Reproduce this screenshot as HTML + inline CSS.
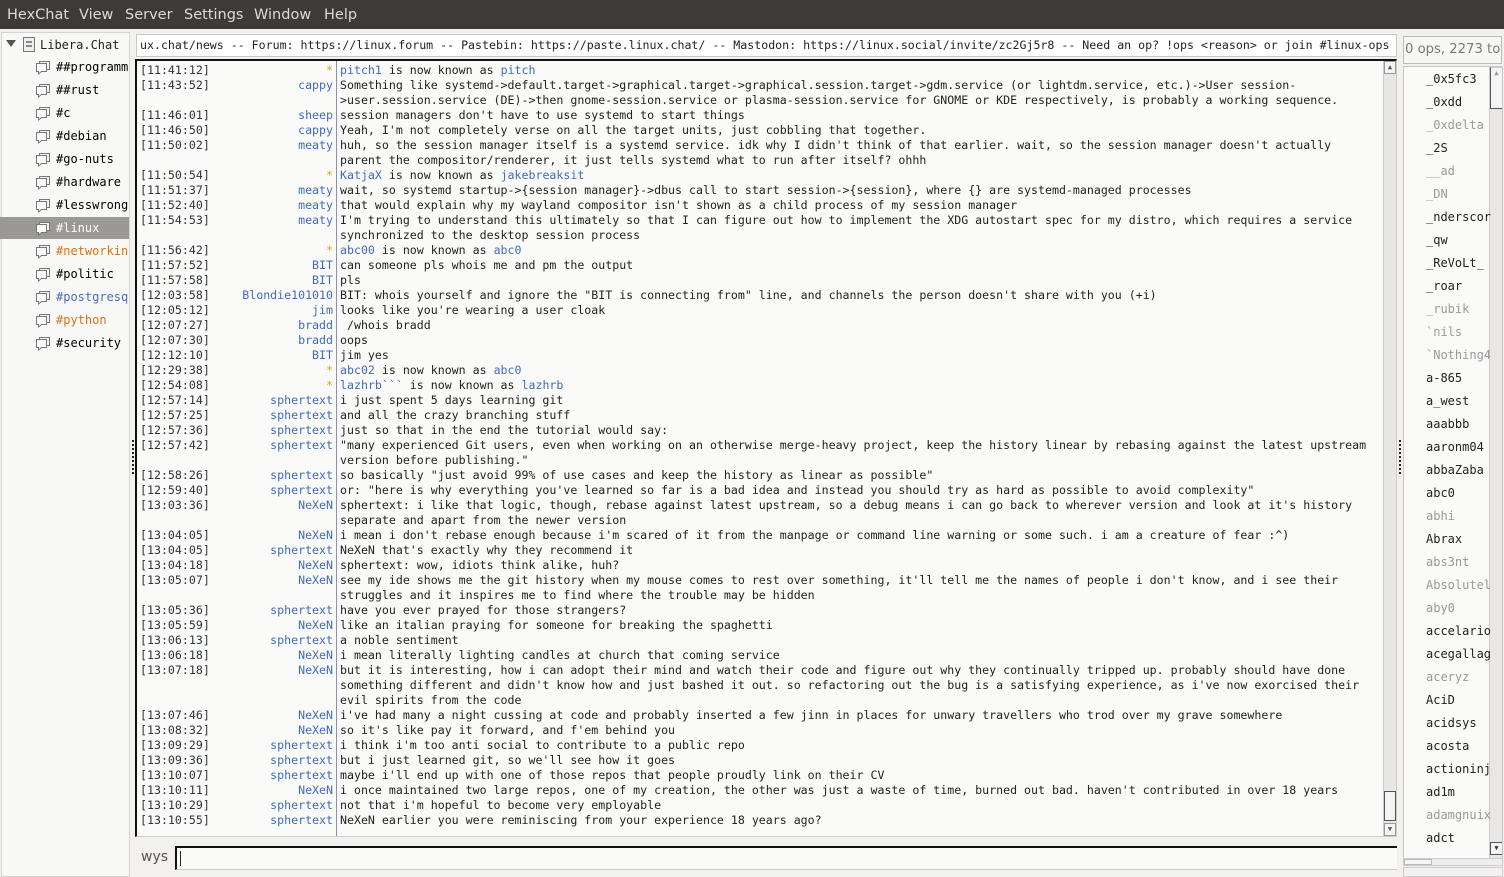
<!DOCTYPE html>
<html><head><meta charset="utf-8">
<style>
*{margin:0;padding:0;box-sizing:border-box}
body{width:1504px;height:877px;overflow:hidden;background:#f2f1f0;position:relative;font-family:"DejaVu Sans Mono","Liberation Mono",monospace}
#menu{position:absolute;left:0;top:0;width:1504px;height:29px;background:#3c3b37;color:#dfdbd2;font-family:"DejaVu Sans","Liberation Sans",sans-serif;font-size:14.5px;line-height:31px}
#menu span{position:absolute;top:0}
#tree{position:absolute;left:1px;top:32px;width:129px;height:845px;background:#f8f8f7;border:1px solid #d6d4d0;font-size:12px;color:#222}
.ti{position:absolute;height:21px;line-height:21px;white-space:nowrap;overflow:hidden}
.ic{position:absolute;left:35px;width:16px;height:16px}
#topic{position:absolute;left:136px;top:34px;width:1261px;height:23px;background:#fff;border:1px solid #c9c7c3;font-size:11.6px;line-height:21px;padding-left:3px;white-space:nowrap;overflow:hidden;color:#222}
#chat{position:absolute;left:135px;top:59px;width:1262px;height:778px;background:#fafaf9;border-top:2px solid #111;border-left:2px solid #111;border-right:1px solid #ccc;border-bottom:1px solid #ccc;overflow:hidden}
.r{position:absolute;left:0;width:1246px;height:15px;line-height:15px;font-size:11.6px;white-space:pre;color:#222}
.t{position:absolute;left:3px;color:#2e3436}
.n{position:absolute;right:1050px;color:#3f6bbf;text-align:right}
.m{position:absolute;left:203px}
.b{color:#3f6bbf}
.y{color:#d6a520}
#sep{position:absolute;left:199px;top:0;width:1px;height:778px;background:#8e8fa8}
#vs{position:absolute;left:1246px;top:0;width:13px;height:776px;background:#e8e7e5;border-left:1px solid #ccc}
#ops{position:absolute;left:1403px;top:36px;width:99px;height:28px;border:1px solid #bcbab5;background:#f7f7f6;font-family:"DejaVu Sans","Liberation Sans",sans-serif;font-size:13.2px;line-height:26px;color:#7a7a7a;padding-left:1px;white-space:nowrap;overflow:hidden}
#ul{position:absolute;left:1403px;top:66px;width:100px;height:793px;background:#fafaf9;border:1px solid #c9c7c3;overflow:hidden;font-size:12px;color:#222}
.u{position:absolute;left:22px;white-space:nowrap}
.aw{color:#9a9a9a}
</style></head><body>
<div id="menu"><span style="left:7px">HexChat</span><span style="left:79px">View</span><span style="left:125px">Server</span><span style="left:184px">Settings</span><span style="left:254px">Window</span><span style="left:324px">Help</span></div>

<div id="tree">
<div style="position:absolute;left:4px;top:7px;width:0;height:0;border-left:5px solid transparent;border-right:5px solid transparent;border-top:7px solid #555"></div>
<svg style="position:absolute;left:20px;top:3px" width="15" height="17"><rect x="1.5" y="1.5" width="11" height="14" fill="#eee" stroke="#777"/><rect x="4" y="5" width="6" height="2" fill="#888"/><rect x="4" y="9" width="6" height="2" fill="#888"/></svg>
<div class="ti" style="left:38px;top:2px">Libera.Chat</div>
</div>
<svg width="0" height="0" style="position:absolute"><defs><g id="bub"><path d="M4.5 2.5h10v8h-10z" fill="#f4f4f4" stroke="#777"/><path d="M1.5 4.5h10v8h-5l-3 2.5v-2.5h-2z" fill="#fafafa" stroke="#777"/></g></defs></svg>
<div style="position:absolute;left:0;top:217px;width:129px;height:22px;background:#9a9994"></div>
<div style="position:absolute;left:0;top:33px;font-size:12px">
<svg class="ic" style="top:26px"><use href="#bub"/></svg><div class="ti" style="left:56px;top:24px;width:72px">##programming</div>
<svg class="ic" style="top:49px"><use href="#bub"/></svg><div class="ti" style="left:56px;top:47px">##rust</div>
<svg class="ic" style="top:72px"><use href="#bub"/></svg><div class="ti" style="left:56px;top:70px">#c</div>
<svg class="ic" style="top:95px"><use href="#bub"/></svg><div class="ti" style="left:56px;top:93px">#debian</div>
<svg class="ic" style="top:118px"><use href="#bub"/></svg><div class="ti" style="left:56px;top:116px">#go-nuts</div>
<svg class="ic" style="top:141px"><use href="#bub"/></svg><div class="ti" style="left:56px;top:139px">#hardware</div>
<svg class="ic" style="top:164px"><use href="#bub"/></svg><div class="ti" style="left:56px;top:162px;width:72px">#lesswrong</div>
<svg class="ic" style="top:187px"><use href="#bub"/></svg><div class="ti" style="left:56px;top:185px;color:#fff">#linux</div>
<svg class="ic" style="top:210px"><use href="#bub"/></svg><div class="ti" style="left:56px;top:208px;width:72px;color:#d9731a">#networking</div>
<svg class="ic" style="top:233px"><use href="#bub"/></svg><div class="ti" style="left:56px;top:231px">#politic</div>
<svg class="ic" style="top:256px"><use href="#bub"/></svg><div class="ti" style="left:56px;top:254px;width:72px;color:#4a6fb8">#postgresql</div>
<svg class="ic" style="top:279px"><use href="#bub"/></svg><div class="ti" style="left:56px;top:277px;color:#d9731a">#python</div>
<svg class="ic" style="top:302px"><use href="#bub"/></svg><div class="ti" style="left:56px;top:300px">#security</div>
</div>
<div style="position:absolute;left:132px;top:440px;width:2px;height:34px;background:repeating-linear-gradient(#222 0 2px,transparent 2px 4px)"></div>

<div id="topic">ux.chat/news -- Forum: https://linux.forum -- Pastebin: https://paste.linux.chat/ -- Mastodon: https://linux.social/invite/zc2Gj5r8 -- Need an op? !ops &lt;reason&gt; or join #linux-ops</div>

<div id="chat">
<div id="sep"></div>
<div id="vs"><div style="position:absolute;left:0;top:0;width:12px;height:13px;border:1px solid #999;background:#f4f4f4;font-size:7px;text-align:center;line-height:11px;color:#555">▲</div><div style="position:absolute;left:0;top:730px;width:12px;height:30px;border:1px solid #555;background:#f4f4f4"></div><div style="position:absolute;left:0;top:762px;width:12px;height:13px;border:1px solid #999;background:#f4f4f4;font-size:7px;text-align:center;line-height:11px;color:#555">▼</div></div>
<div style="position:absolute;left:0;top:2px;width:1246px">
<div class="r" style="top:0"><span class="t">[11:41:12]</span><span class="n y">*</span><span class="m"><span class="b">pitch1</span> is now known as <span class="b">pitch</span></span></div>
<div class="r" style="top:15px"><span class="t">[11:43:52]</span><span class="n">cappy</span><span class="m">Something like systemd-&gt;default.target-&gt;graphical.target-&gt;graphical.session.target-&gt;gdm.service (or lightdm.service, etc.)-&gt;User session-</span></div>
<div class="r" style="top:30px"><span class="m">&gt;user.session.service (DE)-&gt;then gnome-session.service or plasma-session.service for GNOME or KDE respectively, is probably a working sequence.</span></div>
<div class="r" style="top:45px"><span class="t">[11:46:01]</span><span class="n">sheep</span><span class="m">session managers don't have to use systemd to start things</span></div>
<div class="r" style="top:60px"><span class="t">[11:46:50]</span><span class="n">cappy</span><span class="m">Yeah, I'm not completely verse on all the target units, just cobbling that together.</span></div>
<div class="r" style="top:75px"><span class="t">[11:50:02]</span><span class="n">meaty</span><span class="m">huh, so the session manager itself is a systemd service. idk why I didn't think of that earlier. wait, so the session manager doesn't actually</span></div>
<div class="r" style="top:90px"><span class="m">parent the compositor/renderer, it just tells systemd what to run after itself? ohhh</span></div>
<div class="r" style="top:105px"><span class="t">[11:50:54]</span><span class="n y">*</span><span class="m"><span class="b">KatjaX</span> is now known as <span class="b">jakebreaksit</span></span></div>
<div class="r" style="top:120px"><span class="t">[11:51:37]</span><span class="n">meaty</span><span class="m">wait, so systemd startup-&gt;{session manager}-&gt;dbus call to start session-&gt;{session}, where {} are systemd-managed processes</span></div>
<div class="r" style="top:135px"><span class="t">[11:52:40]</span><span class="n">meaty</span><span class="m">that would explain why my wayland compositor isn't shown as a child process of my session manager</span></div>
<div class="r" style="top:150px"><span class="t">[11:54:53]</span><span class="n">meaty</span><span class="m">I'm trying to understand this ultimately so that I can figure out how to implement the XDG autostart spec for my distro, which requires a service</span></div>
<div class="r" style="top:165px"><span class="m">synchronized to the desktop session process</span></div>
<div class="r" style="top:180px"><span class="t">[11:56:42]</span><span class="n y">*</span><span class="m"><span class="b">abc00</span> is now known as <span class="b">abc0</span></span></div>
<div class="r" style="top:195px"><span class="t">[11:57:52]</span><span class="n">BIT</span><span class="m">can someone pls whois me and pm the output</span></div>
<div class="r" style="top:210px"><span class="t">[11:57:58]</span><span class="n">BIT</span><span class="m">pls</span></div>
<div class="r" style="top:225px"><span class="t">[12:03:58]</span><span class="n">Blondie101010</span><span class="m">BIT: whois yourself and ignore the "BIT is connecting from" line, and channels the person doesn't share with you (+i)</span></div>
<div class="r" style="top:240px"><span class="t">[12:05:12]</span><span class="n">jim</span><span class="m">looks like you're wearing a user cloak</span></div>
<div class="r" style="top:255px"><span class="t">[12:07:27]</span><span class="n">bradd</span><span class="m"> /whois bradd</span></div>
<div class="r" style="top:270px"><span class="t">[12:07:30]</span><span class="n">bradd</span><span class="m">oops</span></div>
<div class="r" style="top:285px"><span class="t">[12:12:10]</span><span class="n">BIT</span><span class="m">jim yes</span></div>
<div class="r" style="top:300px"><span class="t">[12:29:38]</span><span class="n y">*</span><span class="m"><span class="b">abc02</span> is now known as <span class="b">abc0</span></span></div>
<div class="r" style="top:315px"><span class="t">[12:54:08]</span><span class="n y">*</span><span class="m"><span class="b">lazhrb&#96;&#96;&#96;</span> is now known as <span class="b">lazhrb</span></span></div>
<div class="r" style="top:330px"><span class="t">[12:57:14]</span><span class="n">sphertext</span><span class="m">i just spent 5 days learning git</span></div>
<div class="r" style="top:345px"><span class="t">[12:57:25]</span><span class="n">sphertext</span><span class="m">and all the crazy branching stuff</span></div>
<div class="r" style="top:360px"><span class="t">[12:57:36]</span><span class="n">sphertext</span><span class="m">just so that in the end the tutorial would say:</span></div>
<div class="r" style="top:375px"><span class="t">[12:57:42]</span><span class="n">sphertext</span><span class="m">"many experienced Git users, even when working on an otherwise merge-heavy project, keep the history linear by rebasing against the latest upstream</span></div>
<div class="r" style="top:390px"><span class="m">version before publishing."</span></div>
<div class="r" style="top:405px"><span class="t">[12:58:26]</span><span class="n">sphertext</span><span class="m">so basically "just avoid 99% of use cases and keep the history as linear as possible"</span></div>
<div class="r" style="top:420px"><span class="t">[12:59:40]</span><span class="n">sphertext</span><span class="m">or: "here is why everything you've learned so far is a bad idea and instead you should try as hard as possible to avoid complexity"</span></div>
<div class="r" style="top:435px"><span class="t">[13:03:36]</span><span class="n">NeXeN</span><span class="m">sphertext: i like that logic, though, rebase against latest upstream, so a debug means i can go back to wherever version and look at it's history</span></div>
<div class="r" style="top:450px"><span class="m">separate and apart from the newer version</span></div>
<div class="r" style="top:465px"><span class="t">[13:04:05]</span><span class="n">NeXeN</span><span class="m">i mean i don't rebase enough because i'm scared of it from the manpage or command line warning or some such. i am a creature of fear :^)</span></div>
<div class="r" style="top:480px"><span class="t">[13:04:05]</span><span class="n">sphertext</span><span class="m">NeXeN that's exactly why they recommend it</span></div>
<div class="r" style="top:495px"><span class="t">[13:04:18]</span><span class="n">NeXeN</span><span class="m">sphertext: wow, idiots think alike, huh?</span></div>
<div class="r" style="top:510px"><span class="t">[13:05:07]</span><span class="n">NeXeN</span><span class="m">see my ide shows me the git history when my mouse comes to rest over something, it'll tell me the names of people i don't know, and i see their</span></div>
<div class="r" style="top:525px"><span class="m">struggles and it inspires me to find where the trouble may be hidden</span></div>
<div class="r" style="top:540px"><span class="t">[13:05:36]</span><span class="n">sphertext</span><span class="m">have you ever prayed for those strangers?</span></div>
<div class="r" style="top:555px"><span class="t">[13:05:59]</span><span class="n">NeXeN</span><span class="m">like an italian praying for someone for breaking the spaghetti</span></div>
<div class="r" style="top:570px"><span class="t">[13:06:13]</span><span class="n">sphertext</span><span class="m">a noble sentiment</span></div>
<div class="r" style="top:585px"><span class="t">[13:06:18]</span><span class="n">NeXeN</span><span class="m">i mean literally lighting candles at church that coming service</span></div>
<div class="r" style="top:600px"><span class="t">[13:07:18]</span><span class="n">NeXeN</span><span class="m">but it is interesting, how i can adopt their mind and watch their code and figure out why they continually tripped up. probably should have done</span></div>
<div class="r" style="top:615px"><span class="m">something different and didn't know how and just bashed it out. so refactoring out the bug is a satisfying experience, as i've now exorcised their</span></div>
<div class="r" style="top:630px"><span class="m">evil spirits from the code</span></div>
<div class="r" style="top:645px"><span class="t">[13:07:46]</span><span class="n">NeXeN</span><span class="m">i've had many a night cussing at code and probably inserted a few jinn in places for unwary travellers who trod over my grave somewhere</span></div>
<div class="r" style="top:660px"><span class="t">[13:08:32]</span><span class="n">NeXeN</span><span class="m">so it's like pay it forward, and f'em behind you</span></div>
<div class="r" style="top:675px"><span class="t">[13:09:29]</span><span class="n">sphertext</span><span class="m">i think i'm too anti social to contribute to a public repo</span></div>
<div class="r" style="top:690px"><span class="t">[13:09:36]</span><span class="n">sphertext</span><span class="m">but i just learned git, so we'll see how it goes</span></div>
<div class="r" style="top:705px"><span class="t">[13:10:07]</span><span class="n">sphertext</span><span class="m">maybe i'll end up with one of those repos that people proudly link on their CV</span></div>
<div class="r" style="top:720px"><span class="t">[13:10:11]</span><span class="n">NeXeN</span><span class="m">i once maintained two large repos, one of my creation, the other was just a waste of time, burned out bad. haven't contributed in over 18 years</span></div>
<div class="r" style="top:735px"><span class="t">[13:10:29]</span><span class="n">sphertext</span><span class="m">not that i'm hopeful to become very employable</span></div>
<div class="r" style="top:750px"><span class="t">[13:10:55]</span><span class="n">sphertext</span><span class="m">NeXeN earlier you were reminiscing from your experience 18 years ago?</span></div>
</div>
</div>

<div style="position:absolute;left:141px;top:849px;font-family:'DejaVu Sans','Liberation Sans',sans-serif;font-size:14px;color:#555">wys</div>
<div style="position:absolute;left:175px;top:846px;width:1222px;height:24px;background:#fafaf9;border-top:2px solid #111;border-left:2px solid #111;border-bottom:1px solid #ccc"><div style="position:absolute;left:3px;top:3px;width:1px;height:15px;background:#222"></div></div>

<div id="ops">0 ops, 2273 total</div>
<div id="ul">
<div style="position:absolute;left:85px;top:0;width:14px;height:791px;background:#e8e7e5;border-left:1px solid #ccc"><div style="position:absolute;left:0;top:0;width:13px;height:42px;border:1px solid #555;border-top-color:#ccc;background:#f4f4f4;font-size:7px;text-align:center;line-height:11px;color:#999">▲</div><div style="position:absolute;left:0;top:775px;width:13px;height:13px;border:1px solid #555;background:#f4f4f4;font-size:7px;text-align:center;line-height:11px;color:#333">▼</div></div>
<div class="u" style="top:5px">_0x5fc3</div>
<div class="u" style="top:28px">_0xdd</div>
<div class="u aw" style="top:51px">_0xdelta</div>
<div class="u" style="top:74px">_2S</div>
<div class="u aw" style="top:97px">__ad</div>
<div class="u aw" style="top:120px">_DN</div>
<div class="u" style="top:143px">_nderscor</div>
<div class="u" style="top:166px">_qw</div>
<div class="u" style="top:189px">_ReVoLt_</div>
<div class="u" style="top:212px">_roar</div>
<div class="u aw" style="top:235px">_rubik</div>
<div class="u aw" style="top:258px">&#96;nils</div>
<div class="u aw" style="top:281px">&#96;Nothing4</div>
<div class="u" style="top:304px">a-865</div>
<div class="u" style="top:327px">a_west</div>
<div class="u" style="top:350px">aaabbb</div>
<div class="u" style="top:373px">aaronm04</div>
<div class="u" style="top:396px">abbaZaba</div>
<div class="u" style="top:419px">abc0</div>
<div class="u aw" style="top:442px">abhi</div>
<div class="u" style="top:465px">Abrax</div>
<div class="u aw" style="top:488px">abs3nt</div>
<div class="u aw" style="top:511px">Absolutel</div>
<div class="u aw" style="top:534px">aby0</div>
<div class="u" style="top:557px">accelario</div>
<div class="u" style="top:580px">acegallag</div>
<div class="u aw" style="top:603px">aceryz</div>
<div class="u" style="top:626px">AciD</div>
<div class="u" style="top:649px">acidsys</div>
<div class="u" style="top:672px">acosta</div>
<div class="u" style="top:695px">actioninj</div>
<div class="u" style="top:718px">ad1m</div>
<div class="u aw" style="top:741px">adamgnuix</div>
<div class="u" style="top:764px">adct</div>
</div>
<div style="position:absolute;left:1403px;top:858px;width:100px;height:8px;border:1px solid #ccc;background:#eee"><div style="width:28px;height:6px;border:1px solid #bbb;background:#f6f6f6"></div></div>
<div style="position:absolute;left:1403px;top:867px;width:100px;height:10px;border:1px solid #ccc;background:#f2f1f0"></div>
<div style="position:absolute;left:1399px;top:440px;width:2px;height:34px;background:repeating-linear-gradient(#222 0 2px,transparent 2px 4px)"></div>
</body></html>
